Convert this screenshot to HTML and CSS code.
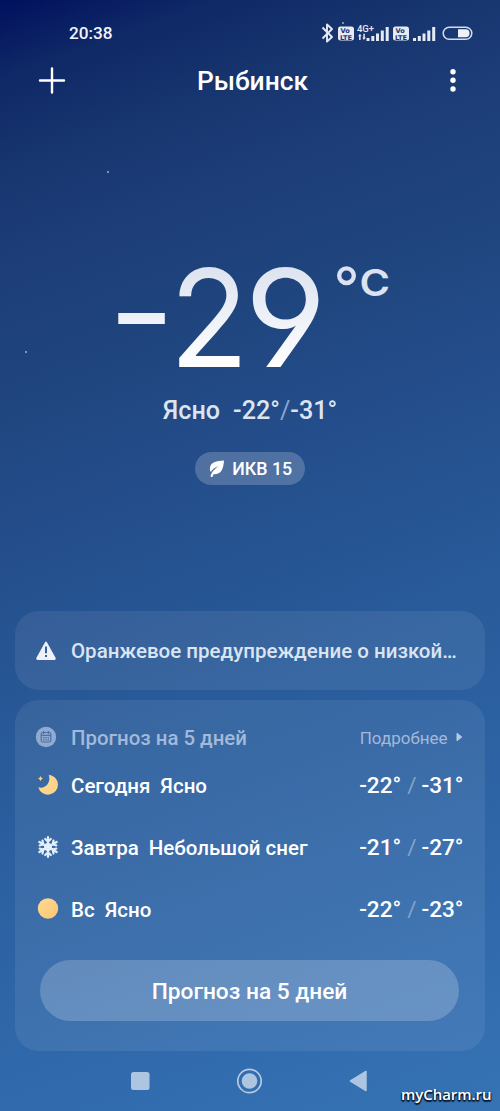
FILE: index.html
```html
<!DOCTYPE html>
<html lang="ru">
<head>
<meta charset="utf-8">
<title>Погода</title>
<link rel="stylesheet" href="styles.css">
</head>
<body>
<div class="screen">
  <header class="status">
    <span class="clock">20:38</span>
    <svg class="status-icons" width="160" height="28" viewBox="0 0 160 28" fill="none">
      <path d="M2.500 8.500 L12 18 L7 22.500 V5.500 L12 10 L2.500 19.500" stroke="#e6eaf4" stroke-width="1.900" stroke-linejoin="round"/>
      <g fill="#e6eaf4">
        <rect x="18" y="7.500" width="16" height="14" rx="2.500"/>
        <rect x="73" y="7.500" width="16" height="14" rx="2.500"/>
        <path d="M46.500 19h3v3h-3zM51.300 17h3v5h-3zM56 14.500h3v7.500h-3zM60.800 11.500h3v10.500h-3zM65.700 8h3v14h-3z"/>
        <path d="M93 19h3v3h-3zM97.800 17h3v5h-3zM102.500 14.500h3v7.500h-3zM107.300 11.500h3v10.500h-3zM112.200 8h3v14h-3z"/>
        <path d="M38 17.200l2-2.400 1.600 2.400h-1v3.800h-1.500v-3.800zM42.300 18.600h1v-3.800h1.500v3.800h1l-1.900 2.500z"/>
      </g>
      <g class="lte"><text x="20.500" y="13.500">Vo</text><text x="20" y="20.500" textLength="12">LTE</text><text x="75.500" y="13.500">Vo</text><text x="75" y="20.500" textLength="12">LTE</text></g>
      <text class="net" x="37" y="12.500" textLength="17">4G+</text>
      <rect x="123.200" y="8.200" width="28.600" height="12" rx="6" stroke="#d4dbea" stroke-width="1.500"/>
      <path d="M138 10.200h7.500a4 4 0 0 1 0 8h-7.500z" fill="#eef1f8"/>
    </svg>
  </header>
  <nav class="topbar">
    <svg width="28" height="28" viewBox="0 0 28 28"><path d="M14 1.500v24M2 13.500h24" stroke="#fff" stroke-width="2.400" stroke-linecap="round"/></svg>
    <h1 class="city">Рыбинск</h1>
    <svg width="28" height="28" viewBox="0 0 28 28" fill="#fff"><circle cx="14" cy="4.700" r="2.700"/><circle cx="14" cy="13.300" r="2.700"/><circle cx="14" cy="22" r="2.700"/></svg>
  </nav>
  <main>
    <section class="current">
      <svg class="temp" width="300" height="130" viewBox="0 0 300 130">
        <defs><linearGradient id="fade" gradientUnits="userSpaceOnUse" x1="0" y1="15" x2="0" y2="117"><stop offset="0" stop-color="#dce2ef"/><stop offset="1" stop-color="#fff"/></linearGradient></defs>
        <rect x="18.300" y="63" width="46.500" height="11" fill="url(#fade)"/>
        <text class="digit" transform="translate(69.500 0) scale(.955 1)" x="0" y="116.700">2</text>
        <text class="digit" transform="translate(144.500 0) scale(1.040 1)" x="0" y="116.700">9</text>
        <circle cx="246.500" cy="25.700" r="7.300" fill="none" stroke="#dce2ef" stroke-width="4.400"/>
        <text class="unit" transform="translate(259.500 0) scale(1.120 1)" x="0" y="45.700">C</text>
      </svg>
      <p class="range"><span class="cond">Ясно</span><span>-22°</span><span class="slash">/</span><span>-31°</span></p>
      <div class="chip">
        <svg width="16" height="18" viewBox="0 0 16 18"><path d="M15 .6C8 .8 1 2 .9 8.800c0 1.400.3 2.300.9 3.200C3.600 9.200 6.200 7.300 10 5.500 6.500 8.300 2.600 11.500 1.500 16.200c.3 1 1.800 1.100 2.200.2l.8-2.100C12 14.700 14.300 10 15 .6z" fill="#fff"/></svg>
        <span>ИКВ 15</span>
      </div>
    </section>
    <section class="card alert">
      <svg class="icon" width="22" height="20" viewBox="0 0 22 20"><path d="M11 1.500 L19.900 17.500 Q20 18 19 18 H3 Q2 18 2.100 17.500z" fill="#eef2f8" stroke="#eef2f8" stroke-width="1.800" stroke-linejoin="round"/><path d="M11 5.500v6.800M11 14v2" stroke="#34609b" stroke-width="2"/></svg>
      <p>Оранжевое предупреждение о низкой…</p>
    </section>
    <section class="card forecast">
      <div class="heading">
        <svg class="icon" width="22" height="22" viewBox="0 0 22 22"><circle cx="11" cy="11" r="10.200" fill="#91abd0"/><g fill="none" stroke="#4b72a9" stroke-width="1.200"><rect x="6.200" y="6.500" width="9.600" height="9.500" rx="1.500"/><path d="M6 9.300h10M8.600 5v3M13.400 5v3"/><path d="M8 11.700h6.500M8 13.900h6.500" stroke-dasharray="1.500 .8"/></g></svg>
        <h2>Прогноз на 5 дней</h2>
        <a class="more">Подробнее</a>
        <svg class="arrow" width="7" height="10" viewBox="0 0 7 10"><path d="M1 1.200v7.600L5.800 5z" fill="#b6c9e2" stroke="#b6c9e2" stroke-linejoin="round"/></svg>
      </div>
      <div class="day">
        <svg class="icon" width="24" height="24" viewBox="0 0 24 24"><path d="M12.700 1.700A10 10 0 1 1 2.300 14.200C9 16.500 15.500 9.500 12.700 1.700z" fill="#fdd48b"/><path d="M4.500 3q.5 2 2.500 2.500q-2 .5-2.500 2.500q-.5-2-2.500-2.500q2-.5 2.500-2.500z" fill="#fdd48b"/></svg>
        <span class="name">Сегодня</span><span class="sky">Ясно</span>
        <span class="hi">-22°</span><span class="slash">/</span><span class="lo">-31°</span>
      </div>
      <div class="day">
        <svg class="icon" width="24" height="24" viewBox="-12 -12 24 24" fill="none" stroke="#e3effc" stroke-width="2.200" stroke-linecap="round">
          <defs><path id="arm" d="M0 0V-10M-2.800-8L0-5.500L2.800-8"/></defs>
          <circle r="4" fill="#e3effc" stroke="none"/>
          <use href="#arm"/><use href="#arm" transform="rotate(60)"/><use href="#arm" transform="rotate(120)"/><use href="#arm" transform="rotate(180)"/><use href="#arm" transform="rotate(240)"/><use href="#arm" transform="rotate(300)"/>
        </svg>
        <span class="name">Завтра</span><span class="sky">Небольшой снег</span>
        <span class="hi">-21°</span><span class="slash">/</span><span class="lo">-27°</span>
      </div>
      <div class="day">
        <svg class="icon" width="24" height="24" viewBox="0 0 24 24"><defs><linearGradient id="sun" x1="0" y1="0" x2="1" y2="1"><stop stop-color="#ffda91"/><stop offset="1" stop-color="#fbc574"/></linearGradient></defs><circle cx="12" cy="11.500" r="10.200" fill="url(#sun)"/></svg>
        <span class="name">Вс</span><span class="sky">Ясно</span>
        <span class="hi">-22°</span><span class="slash">/</span><span class="lo">-23°</span>
      </div>
      <button class="button">Прогноз на 5 дней</button>
    </section>
  </main>
  <footer class="navbar">
    <svg width="20" height="20" viewBox="0 0 20 20"><rect x="1" y="1" width="18.500" height="18" rx="2.500" fill="#adc5e0"/></svg>
    <svg width="28" height="28" viewBox="0 0 28 28"><circle cx="14.500" cy="14" r="11.700" fill="none" stroke="#b4cae3" stroke-width="1.700"/><circle cx="14.500" cy="14" r="7.800" fill="#adc5e0"/></svg>
    <svg width="20" height="22" viewBox="0 0 20 22"><path d="M2.500 11 L18 1.500 V20.500z" fill="#adc5e0" stroke="#adc5e0" stroke-width="1.500" stroke-linejoin="round"/></svg>
  </footer>
  <span class="star star-a"></span><span class="star star-b"></span><span class="star star-c"></span>
  <span class="watermark">myCharm.ru</span>
</div>
</body>
</html>
```
FILE: styles.css
```css
* { box-sizing: border-box; margin: 0; padding: 0; }
body { font-family: Roboto, "Noto Sans", sans-serif; font-weight: 500; color: #fff; }
.screen {
  position: relative;
  width: 500px;
  height: 1111px;
  overflow: hidden;
  background: linear-gradient(160deg, #00105e 0%, #0f2866 6%, #17356f 13%, #1c3c77 19%, #20467f 32%, #234c89 40%, #295b9a 60%, #2f67a9 80%, #3573b5 100%);
}
svg { display: block; flex: none; overflow: visible; }
.status { display: flex; justify-content: space-between; align-items: center; height: 48px; padding: 18px 20px 0 69px; }
.clock { font-size: 17.2px; line-height: 30px; color: #f2f4fa; }
.lte { font: 700 6.6px "DejaVu Sans", sans-serif; fill: #183672; }
.net { font: 500 9.5px Roboto, sans-serif; fill: #e6eaf4; }
.topbar { display: flex; justify-content: space-between; align-items: center; height: 65px; padding: 0 33px 0 38px; }
.city { font-size: 26.4px; font-weight: 500; line-height: 36px; }
.current { display: flex; flex-direction: column; align-items: center; height: 498px; padding-top: 137px; }
.digit { font: 400 136px Inter, sans-serif; font-feature-settings: "cv04"; fill: url(#fade); }
.unit { font: 600 37px Inter, sans-serif; fill: #dce2ef; }
.range { display: flex; margin-top: 16px; font-size: 25.2px; line-height: 30px; color: #dce4f0; }
.cond { margin-right: 13px; }
.slash { font-weight: 400; color: #8ca7cd; }
.chip { display: flex; align-items: center; gap: 7px; height: 33px; margin-top: 26px; padding: 0 12.5px 0 14px; border-radius: 17px; font-size: 17.8px; background: rgba(255,255,255,.2); }
.card { margin: 0 15px; border-radius: 24px; background: rgba(255,255,255,.075); }
.alert { display: flex; align-items: center; height: 79px; padding: 1px 20px 0; color: #dbe4f1; }
.alert .icon { margin-top: -1px; }
.alert p { margin-left: 14px; font-size: 20.5px; white-space: nowrap; }
.forecast { height: 351px; margin-top: 10px; padding: 21px 20px 0; }
.heading { display: flex; align-items: center; height: 34px; color: #a3b9d9; }
.heading .icon { margin-top: -3px; }
.heading h2 { margin-left: 14px; font-size: 20.4px; font-weight: 500; }
.more { margin-left: auto; font-size: 17px; font-weight: 400; }
.arrow { margin: -2px 2.5px 0 8px; }
.day { display: flex; align-items: center; height: 62px; font-size: 20.5px; }
.day .icon { margin: -3px 11px 0 1px; }
.name { margin-right: 10px; }
.hi, .lo, .day .slash { margin-top: -2px; font-size: 22.6px; }
.hi { margin-left: auto; }
.lo { width: 43.5px; }
.day .slash { margin-left: 6px; margin-right: 5px; color: #83a3cc; }
.button { display: block; width: 419px; height: 61px; margin: 19px 0 0 5px; padding-top: 2px; border: 0; border-radius: 31px; font: 500 22.7px Roboto, sans-serif; color: #fff; background: rgba(255,255,255,.2); }
.navbar { display: flex; align-items: center; justify-content: space-between; height: 60px; padding: 0 132px 0 130px; }
.star { position: absolute; width: 2px; height: 2px; border-radius: 50%; background: #9caed0; }
.star-a { left: 107px; top: 171px; }
.star-b { left: 25px; top: 351px; }
.star-c { left: 342px; top: 22px; }
.watermark { position: absolute; left: 401px; top: 1084px; font: 600 15px/20px "Open Sans", sans-serif; letter-spacing: -.05px; color: #fff; text-shadow: -1px 1px 1px #0b2038, 1px 1px 1px #0b2038, 0 2px 1px #0b2038; }
```
